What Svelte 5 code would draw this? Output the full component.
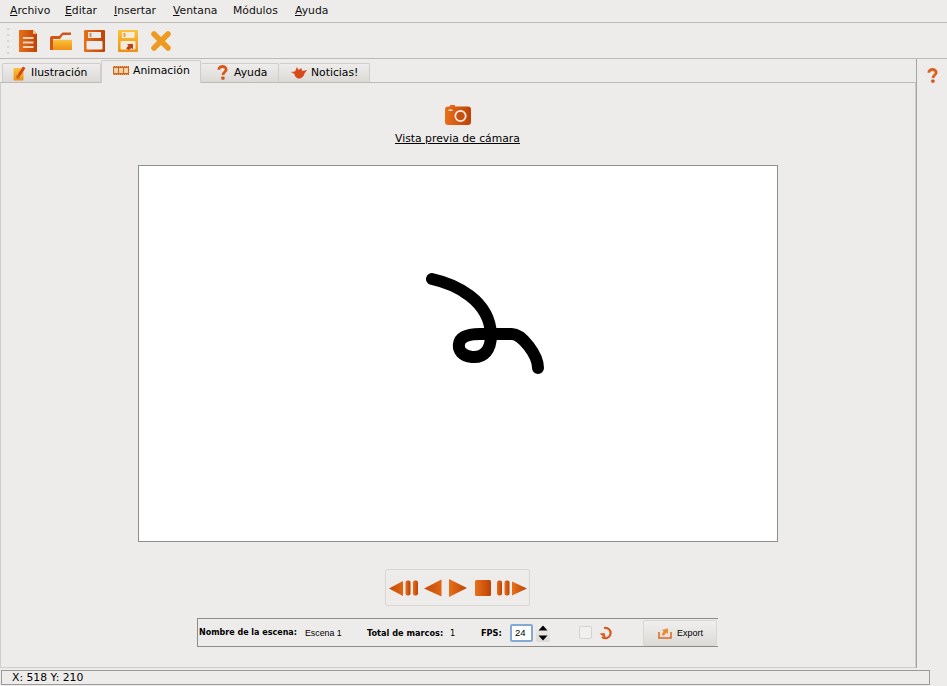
<script>
  const menus = [
    { u: 'A', rest: 'rchivo', w: 55 },
    { u: 'E', rest: 'ditar', w: 49 },
    { u: 'I', rest: 'nsertar', w: 59 },
    { u: 'V', rest: 'entana', w: 60 },
    { u: '', rest: 'Módulos', w: 62 },
    { u: 'A', rest: 'yuda', w: 40 }
  ];
</script>

<svg class="defs" width="0" height="0" aria-hidden="true">
  <defs>
    <linearGradient id="og" x1="0" y1="0" x2="1" y2="0">
      <stop offset="0" stop-color="#e8701a" />
      <stop offset="1" stop-color="#bd4206" />
    </linearGradient>
    <linearGradient id="ogr" x1="1" y1="0" x2="0" y2="0">
      <stop offset="0" stop-color="#e06414" />
      <stop offset="1" stop-color="#c44a06" />
    </linearGradient>
    <linearGradient id="yg" x1="0" y1="0" x2="0" y2="1">
      <stop offset="0" stop-color="#fbc33c" />
      <stop offset="1" stop-color="#ee8f16" />
    </linearGradient>
  </defs>
</svg>

<div class="window">
  <nav class="menubar">
    {#each menus as m}
      <span class="menu" style="width: {m.w}px"><u>{m.u}</u>{m.rest}</span>
    {/each}
  </nav>

  <div class="toolbar">
    <div class="grip"></div>
    <svg width="19" height="22" viewBox="0 0 19 22">
      <path d="M0 0h14l4 4v18H0z" fill="url(#og)" />
      <path d="M14 0l4 4h-4z" fill="#f8c07a" />
      <path d="M4 8h10.500M4 12.500h10.500M4 17h10.500" stroke="#f4d2b8" stroke-width="2" />
    </svg>
    <svg width="22" height="18" viewBox="0 0 22 18">
      <path d="M0 18V6c0-1 .7-2 2-2h7l3-3c.5-.5 1-.5 1.500-.5H21V3H13l-3 4H3v11z" fill="#d2551a" />
      <path d="M3 18V8.500c0-.5.300-.8.800-.8H22V18z" fill="url(#yg)" />
    </svg>
    <svg width="22" height="22" viewBox="0 0 22 22">
      <rect width="21" height="22" rx="1" fill="url(#og)" />
      <rect x="4" y="2" width="13" height="6" fill="#edecea" />
      <rect x="2.500" y="11" width="16" height="8.500" rx="1" fill="#edecea" />
      <rect x="5.500" y="3" width="2" height="4" fill="#e88a3a" />
    </svg>
    <svg width="21" height="22" viewBox="0 0 21 22">
      <rect width="20" height="22" rx="1" fill="url(#yg)" />
      <rect x="4" y="2" width="12.500" height="6" fill="#f5ecd8" />
      <rect x="2.500" y="11" width="15" height="8.500" rx="1" fill="#f5ecd8" />
      <rect x="5.500" y="3" width="2" height="4" fill="#eea03a" />
      <path d="M8 18.500l2.500-3-1.500-1.500h6v5.500l-1.500-1.500-2.500 2z" fill="#b9431a" />
    </svg>
    <svg width="20" height="20" viewBox="0 0 20 20">
      <path d="M3 3l14 14M17 3L3 17" stroke="#ee9a20" stroke-width="5.500" stroke-linecap="round" />
    </svg>
  </div>

  <div class="body">
    <div class="center">
      <div class="tabs">
        <div class="tab t1">
          <svg width="13" height="16" viewBox="0 0 13 16">
            <rect x="0.500" y="3" width="10" height="12.500" rx="1" fill="url(#yg)" />
            <path d="M5 9l5-7.500 2.500 1.500-5 7.500-2.500 1z" fill="#d8421a" />
            <rect x="3.500" y="10" width="3" height="3.500" fill="#c8620f" />
          </svg>
          <span>Ilustración</span>
        </div>
        <div class="tab t2 active">
          <svg width="16" height="9" viewBox="0 0 16 9">
            <rect width="16" height="9" fill="#d0661c" />
            <path d="M1 2h4v5H1zM6 2h4v5H6zM11 2h4v5h-4z" fill="#f2d2a8" />
            <path d="M0 .5h16M0 8.500h16" stroke="#f2d2a8" stroke-width=".6" stroke-dasharray="1 1" />
          </svg>
          <span>Animación</span>
        </div>
        <div class="tab t3">
          <svg width="11" height="15" viewBox="0 0 11 15">
            <path d="M1.800 4.700C1.800 2.700 3.500 1.500 5.500 1.500S9.200 2.700 9.200 4.500C9.200 7 6 7 6 10" fill="none" stroke="#d9591a" stroke-width="2.800" />
            <rect x="4.200" y="11.500" width="3.400" height="3.200" rx="1" fill="#d2551a" />
          </svg>
          <span>Ayuda</span>
        </div>
        <div class="tab t4">
          <svg width="16" height="12" viewBox="0 0 16 12">
            <path d="M0 5l4-.5L6 0l1.500 3L10.500 1l.5 3 5-1-2.500 3.500C13 9.500 10 12 7 11.500 5 11 3.500 9 3.500 7z" fill="#d8491a" />
          </svg>
          <span>Noticias!</span>
        </div>
      </div>

      <main class="panel">
        <svg class="camera" width="26" height="20" viewBox="0 0 26 20">
          <rect y="1.500" width="26" height="18.500" rx="3" fill="url(#og)" />
          <rect x="5" y="0" width="5" height="2" fill="#e2681a" />
          <rect x="3.500" y="4.500" width="4" height="1.500" fill="#f6ddc8" />
          <circle cx="15.500" cy="11" r="5.200" fill="#c8500e" stroke="#f8ece2" stroke-width="1.800" />
        </svg>
        <div class="camlabel">Vista previa de cámara</div>

        <div class="canvas">
          <svg width="638" height="375" viewBox="139 166 638 375">
            <path d="M432 279C455 284 490 300 491 335C491 350 484 358 472 357C462 356 458 350 459 344C460 337 468 334 480 334L512 334C522 334 538 355 538 368" fill="none" stroke="#000" stroke-width="12" stroke-linecap="round" stroke-linejoin="round" />
          </svg>
        </div>

        <div class="player">
          <svg width="29" height="16" viewBox="0 0 29 16">
            <path d="M0 8.500L14 1v15z" fill="url(#ogr)" />
            <rect x="16.500" y="0.500" width="5" height="15" rx="2" fill="url(#og)" />
            <rect x="24" y="0.500" width="5" height="15" rx="2" fill="url(#og)" />
          </svg>
          <svg width="18" height="18" viewBox="0 0 18 18">
            <path d="M0 9.500L17.500 0.500v17z" fill="url(#ogr)" />
          </svg>
          <svg width="19" height="18" viewBox="0 0 19 18">
            <path d="M19 9L1 0v18z" fill="url(#og)" />
          </svg>
          <svg width="18" height="16" viewBox="0 0 18 16">
            <rect x="2" width="16" height="16" rx="1.500" fill="url(#og)" />
          </svg>
          <svg width="30" height="16" viewBox="0 0 30 16">
            <rect x="0" y="0.500" width="5" height="15" rx="2" fill="url(#og)" />
            <rect x="7.500" y="0.500" width="5" height="15" rx="2" fill="url(#og)" />
            <path d="M30 8.500L15 1.500v14z" fill="url(#og)" />
          </svg>
        </div>

        <div class="infobar">
          <b class="l1">Nombre de la escena:</b>
          <span class="v1">Escena 1</span>
          <b class="l2">Total de marcos:</b>
          <span class="v2">1</span>
          <b class="l3">FPS:</b>
          <div class="fps">24</div>
          <div class="spin">
            <svg width="14" height="8" viewBox="0 0 14 8"><path d="M2.500 6.500l4.500-5 4.500 5z" /></svg>
            <svg width="14" height="8" viewBox="0 0 14 8"><path d="M2.500 1.500l4.500 5 4.500-5z" /></svg>
          </div>
          <div class="check"></div>
          <svg class="loop" width="14" height="14" viewBox="0 0 14 14">
            <path d="M5 2A5.200 5.200 0 1 1 3 11" fill="none" stroke="#d8591c" stroke-width="2.200" />
            <path d="M0.500 7.500l6.500 5-1.500-5.500z" fill="#d8591c" />
          </svg>
          <div class="export">
            <svg width="14" height="12" viewBox="0 0 14 12">
              <path d="M1 5v6h12V5" fill="none" stroke="#d9691e" stroke-width="1.500" />
              <path d="M3.500 8l2-3.500L4 3l6-1.500V7L8.500 5.500 6 8.500z" fill="#e98a30" />
            </svg>
            <span>Export</span>
          </div>
        </div>
      </main>
    </div>

    <aside class="dock">
      <svg width="11" height="15" viewBox="0 0 11 15">
        <path d="M1.800 4.700C1.800 2.700 3.500 1.500 5.500 1.500S9.200 2.700 9.200 4.500C9.200 7 6 7 6 10" fill="none" stroke="#de5f1a" stroke-width="2.800" />
        <rect x="4.200" y="11.500" width="3.400" height="3.200" rx="1" fill="#d2551a" />
      </svg>
    </aside>
  </div>

  <footer class="status">X: 518 Y: 210</footer>
</div>

<style>
  :global(body) {
    margin: 0;
    background: #edecea;
  }
  .defs {
    position: absolute;
  }
  .window {
    width: 947px;
    height: 686px;
    display: flex;
    flex-direction: column;
    overflow: hidden;
    background: #edecea;
    color: #000;
    font-family: "DejaVu Sans", sans-serif;
    font-size: 10.800px;
  }
  .menubar {
    height: 23px;
    box-sizing: border-box;
    flex: none;
    display: flex;
    align-items: center;
    padding: 0 0 2px 10px;
    border-bottom: 1px solid #bdbbb8;
  }
  .menu {
    color: #111;
    white-space: nowrap;
  }
  .toolbar {
    height: 36px;
    box-sizing: border-box;
    flex: none;
    display: flex;
    align-items: center;
    gap: 12px;
    padding-left: 7px;
    border-bottom: 1px solid #bdbbb8;
  }
  .grip {
    width: 5px;
    height: 30px;
    flex: none;
    margin-right: -5px;
    background-image:
      radial-gradient(circle, #c9c7c4 0.900px, transparent 1.200px),
      radial-gradient(circle, #f8f7f6 0.900px, transparent 1.200px);
    background-size: 5px 6px, 5px 6px;
    background-position: -1.500px 0, 1.500px 3px;
  }
  .body {
    flex: 1;
    min-height: 0;
    display: flex;
  }
  .center {
    width: 917px;
    flex: none;
    display: flex;
    flex-direction: column;
    border-right: 1px solid #a6a4a1;
    box-sizing: border-box;
  }
  .tabs {
    height: 23px;
    flex: none;
    display: flex;
    align-items: flex-end;
    padding-left: 2px;
  }
  .tab {
    height: 19px;
    box-sizing: border-box;
    flex: none;
    display: flex;
    align-items: center;
    padding-bottom: 1px;
    border: 1px solid #cfcdca;
    border-bottom: none;
    border-left: none;
    border-radius: 2px 2px 0 0;
    background: linear-gradient(#eeedeb, #dcdad7);
  }
  .t1 {
    width: 99px;
    padding-left: 10px;
    gap: 5px;
    border-left: 1px solid #cfcdca;
  }
  .t2 {
    width: 100px;
    padding: 0 0 3px 11px;
    gap: 4px;
  }
  .t3 {
    width: 78px;
    padding-left: 16px;
    gap: 6px;
  }
  .t4 {
    width: 91px;
    padding-left: 12px;
    gap: 4px;
  }
  .tab.active {
    height: 23px;
    background: #edecea;
    margin-bottom: -1px;
    position: relative;
    z-index: 1;
    border-left: 1px solid #cfcdca;
  }
  .panel {
    flex: 1;
    min-height: 0;
    display: flex;
    flex-direction: column;
    align-items: center;
    border: 1px solid #cfcdca;
    border-top-color: #bdbbb8;
    padding-top: 22px;
    box-sizing: border-box;
  }
  .camera {
    display: block;
  }
  .camlabel {
    margin-top: 7px;
    margin-right: 1px;
    height: 14px;
    line-height: 13px;
    text-decoration: underline;
  }
  .canvas {
    margin-top: 19px;
    width: 640px;
    height: 377px;
    box-sizing: border-box;
    flex: none;
    background: #fff;
    border: 1px solid #8e8e8e;
  }
  .canvas svg {
    display: block;
  }
  .player {
    margin-top: 27px;
    margin-right: 1px;
    width: 145px;
    height: 37px;
    box-sizing: border-box;
    flex: none;
    display: flex;
    align-items: center;
    gap: 6px;
    padding-left: 3px;
    border: 1px solid #d9d7d4;
    border-radius: 2px;
  }
  .infobar {
    margin-top: 12px;
    margin-right: 1px;
    width: 521px;
    height: 29px;
    box-sizing: border-box;
    flex: none;
    display: flex;
    align-items: center;
    border: 1px solid #8c8c8c;
    border-right: none;
    font-size: 8.200px;
  }
  .infobar b {
    font-weight: bold;
  }
  .l1 {
    margin-left: 1px;
    width: 106px;
    white-space: nowrap;
    font-size: 8px;
  }
  .v1 {
    width: 62px;
    white-space: nowrap;
    font-family: "Liberation Sans", sans-serif;
    font-size: 8.800px;
  }
  .l2 {
    width: 83px;
    white-space: nowrap;
  }
  .v2 {
    width: 31px;
  }
  .l3 {
    width: 29px;
  }
  .fps {
    width: 23px;
    height: 18px;
    box-sizing: border-box;
    background: #fff;
    border: 2px solid #86a8d6;
    border-radius: 2px;
    line-height: 14px;
    padding-left: 3px;
    font-family: "Liberation Sans", sans-serif;
    font-size: 9.500px;
  }
  .spin {
    margin-left: 3px;
    width: 14px;
    height: 18px;
    display: flex;
    flex-direction: column;
    justify-content: space-between;
    border-radius: 2px;
    background: linear-gradient(#f0efed, #dcdad7);
  }
  .spin svg {
    display: block;
  }
  .check {
    margin-left: 29px;
    width: 13px;
    height: 13px;
    box-sizing: border-box;
    background: #f1f0ee;
    border: 1px solid #d4d2cf;
    border-radius: 2px;
  }
  .loop {
    margin-left: 7px;
  }
  .export {
    margin-left: 30px;
    width: 74px;
    height: 26px;
    box-sizing: border-box;
    flex: none;
    display: flex;
    align-items: center;
    gap: 5px;
    padding-left: 14px;
    border: 1px solid #d9d7d4;
    border-radius: 2px;
    background: linear-gradient(#f0efed, #dddbd8);
    font-family: "Liberation Sans", sans-serif;
    font-size: 9px;
  }
  .dock {
    flex: 1;
    display: flex;
    justify-content: center;
    align-items: flex-start;
    padding-top: 9px;
  }
  .status {
    height: 15px;
    flex: none;
    margin: 2px 17px 1px 1px;
    box-sizing: border-box;
    border: 1px solid #9a9a98;
    padding-left: 10px;
    line-height: 13px;
  }
</style>
